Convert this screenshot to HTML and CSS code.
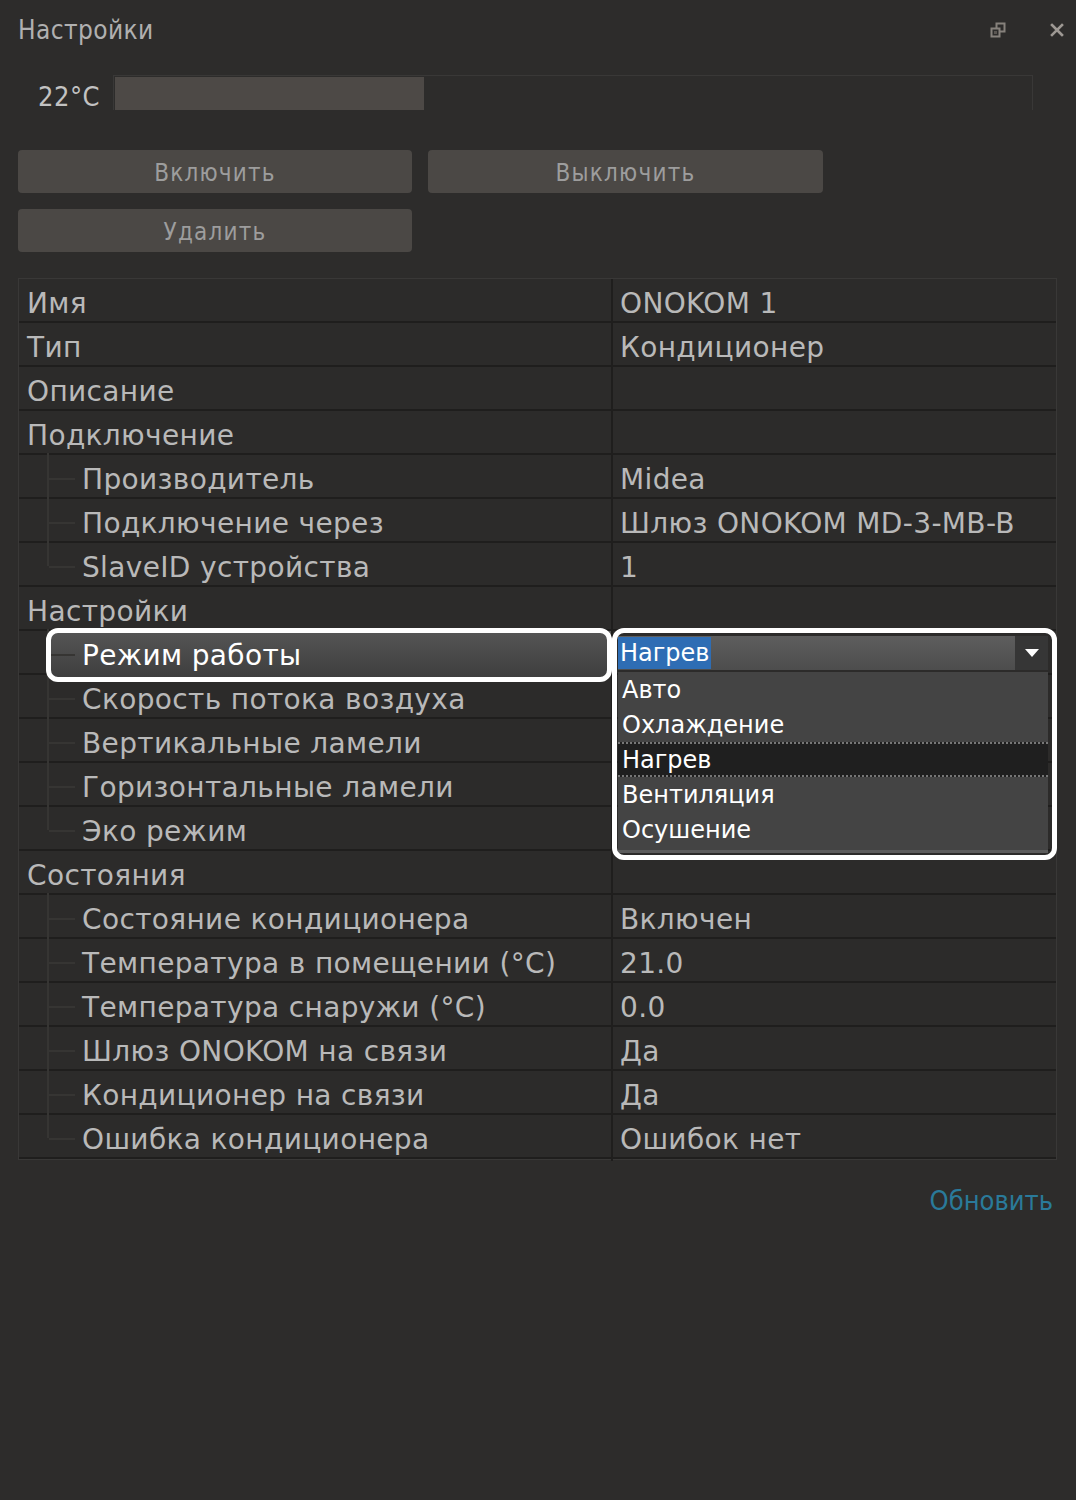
FILE: index.html
```html
<!DOCTYPE html>
<html lang="ru">
<head>
<meta charset="utf-8">
<title>Настройки</title>
<link rel="stylesheet" href="styles.css">
</head>
<body>
<div class="window">
  <header class="titlebar">
    <span class="title">Настройки</span>
    <div class="win-icons">
      <svg class="ico-restore" width="16" height="16" viewBox="0 0 16 16">
        <rect x="6.5" y="1.5" width="8" height="8" fill="#2d2c2b" stroke="#86817c" stroke-width="2"/>
        <rect x="1.5" y="6.5" width="8" height="8" fill="#2d2c2b" stroke="#86817c" stroke-width="2"/>
        <rect x="4" y="9" width="3" height="3" fill="#5a5652"/>
      </svg>
      <svg class="ico-close" width="14" height="14" viewBox="0 0 14 14">
        <path d="M2 2 L12 12 M12 2 L2 12" stroke="#9d9893" stroke-width="2.6" stroke-linecap="square"/>
      </svg>
    </div>
  </header>

  <div class="temp-row">
    <span class="temp-label">22°C</span>
    <div class="bar"><div class="bar-fill" style="width:309px"></div></div>
  </div>

  <div class="buttons">
    <button class="btn">Включить</button>
    <button class="btn">Выключить</button>
    <button class="btn">Удалить</button>
  </div>

  <div class="props">
    <div class="row"><div class="name">Имя</div><div class="val">ONOKOM 1</div></div>
    <div class="row"><div class="name">Тип</div><div class="val">Кондиционер</div></div>
    <div class="row"><div class="name">Описание</div><div class="val"></div></div>
    <div class="row"><div class="name">Подключение</div><div class="val"></div></div>
    <div class="row"><div class="name child">Производитель</div><div class="val">Midea</div></div>
    <div class="row"><div class="name child">Подключение через</div><div class="val">Шлюз ONOKOM MD-3-MB-B</div></div>
    <div class="row"><div class="name child last">SlaveID устройства</div><div class="val">1</div></div>
    <div class="row"><div class="name">Настройки</div><div class="val"></div></div>
    <div class="row selected"><div class="name child">Режим работы</div><div class="val"></div></div>
    <div class="row"><div class="name child">Скорость потока воздуха</div><div class="val"></div></div>
    <div class="row"><div class="name child">Вертикальные ламели</div><div class="val"></div></div>
    <div class="row"><div class="name child">Горизонтальные ламели</div><div class="val"></div></div>
    <div class="row"><div class="name child last">Эко режим</div><div class="val"></div></div>
    <div class="row"><div class="name">Состояния</div><div class="val"></div></div>
    <div class="row"><div class="name child">Состояние кондиционера</div><div class="val">Включен</div></div>
    <div class="row"><div class="name child">Температура в помещении (°C)</div><div class="val">21.0</div></div>
    <div class="row"><div class="name child">Температура снаружи (°C)</div><div class="val">0.0</div></div>
    <div class="row"><div class="name child">Шлюз ONOKOM на связи</div><div class="val">Да</div></div>
    <div class="row"><div class="name child">Кондиционер на связи</div><div class="val">Да</div></div>
    <div class="row"><div class="name child last">Ошибка кондиционера</div><div class="val">Ошибок нет</div></div>

    <div class="dropdown">
      <div class="combo">
        <span class="combo-text">Нагрев</span>
        <span class="combo-arrow"><svg width="14" height="8" viewBox="0 0 14 8"><path d="M0 0 H14 L7 8 Z" fill="#ffffff"/></svg></span>
      </div>
      <ul class="options">
        <li>Авто</li>
        <li>Охлаждение</li>
        <li class="current">Нагрев</li>
        <li>Вентиляция</li>
        <li>Осушение</li>
      </ul>
    </div>

    <div class="mark mark-name"></div>
    <div class="mark mark-value"></div>
  </div>

  <div class="footer"><a class="refresh">Обновить</a></div>
</div>
</body>
</html>
```

FILE: styles.css
```css
* { box-sizing: border-box; }

html, body {
  margin: 0;
  padding: 0;
  background: #2d2c2b;
}

body {
  font-family: "DejaVu Sans", "Noto Sans", sans-serif;
  color: #b8b8b8;
}

.window {
  width: 1076px;
  height: 1500px;
  padding: 0 19px 0 18px;
  background: #2d2c2b;
}

.titlebar {
  height: 60px;
  display: flex;
  align-items: center;
  justify-content: space-between;
  margin-right: -7px;
}

.title {
  font-family: "DejaVu Sans Condensed", "DejaVu Sans", sans-serif;
  font-size: 26px;
  color: #b0b0b0;
  letter-spacing: 0.4px;
}

.win-icons {
  display: flex;
  align-items: center;
  gap: 44px;
}

.temp-row {
  margin-top: 15px;
  height: 35px;
  display: flex;
  align-items: center;
  padding-left: 20px;
}

.temp-label {
  width: 75px;
  padding-top: 7px;
  font-family: "DejaVu Sans Condensed", "DejaVu Sans", sans-serif;
  font-size: 27px;
  letter-spacing: 0.5px;
  color: #c2c2c2;
}

.bar {
  width: 920px;
  height: 35px;
  border: 1px solid #393837;
  border-bottom: none;
  padding: 1px 1px 0 1px;
}

.bar-fill {
  height: 100%;
  background: #4d4946;
}

.buttons {
  margin-top: 40px;
  display: grid;
  grid-template-columns: 394px 395px;
  column-gap: 16px;
  row-gap: 16px;
}

.btn {
  height: 43px;
  border: none;
  border-radius: 4px;
  background: #4b4845;
  color: #9d9d9d;
  font-family: "DejaVu Sans Condensed", "DejaVu Sans", sans-serif;
  font-size: 24px;
  letter-spacing: 1.2px;
  padding: 3px 0 0 0;
}

.props {
  position: relative;
  margin-top: 26px;
  width: 1039px;
  border: 1px solid #393837;
  background: #2c2b2a;
}

.row {
  display: grid;
  grid-template-columns: 594px 1fr;
  height: 44px;
  border-bottom: 2px solid #1f1e1d;
}

.row:last-of-type {
  height: 42px;
  border-bottom: none;
}

.name, .val {
  font-size: 28px;
  line-height: 42px;
  padding-top: 4px;
  letter-spacing: 0.35px;
  white-space: nowrap;
  color: #b9b9b9;
}

.name {
  position: relative;
  padding-left: 8px;
  border-right: 2px solid #1f1e1d;
}

.val {
  padding-left: 7px;
}

.name.child {
  padding-left: 63px;
}

/* tree lines */
.name.child::before {
  content: "";
  position: absolute;
  left: 28px;
  top: -2px;
  bottom: -2px;
  border-left: 2px solid #363533;
}

.name.child.last::before {
  bottom: 50%;
}

.name.child::after {
  content: "";
  position: absolute;
  left: 30px;
  width: 26px;
  top: 50%;
  border-top: 2px solid #363533;
}

.row.selected .name {
  color: #ffffff;
  background: linear-gradient(#555555, #3e3e3e) 28px 0 / calc(100% - 28px) 100% no-repeat;
}

/* open combo box */
.dropdown {
  position: absolute;
  left: 599px;
  top: 357px;
  width: 430px;
  z-index: 2;
}

.combo {
  height: 34px;
  display: flex;
  align-items: stretch;
  background: linear-gradient(#5e5e5e, #4d4d4d);
}

.combo-text {
  background: #2e6db4;
  color: #ffffff;
  font-size: 24px;
  line-height: 32px;
  padding: 0 1px 0 2px;
  margin: 1px 0;
}

.combo-arrow {
  margin-left: auto;
  width: 33px;
  background: #363636;
  display: flex;
  align-items: center;
  justify-content: center;
}

.options {
  list-style: none;
  margin: 0;
  margin-top: 2px;
  padding: 0 0 3px 0;
  background: #444444;
  border-bottom: 3px solid #5c5c5c;
}

.options li {
  height: 35px;
  line-height: 37px;
  padding-left: 4px;
  font-size: 24px;
  color: #ffffff;
}

.options li.current {
  background: #1f1f1f;
  border-top: 2px dotted #777777;
  border-bottom: 2px dotted #777777;
  line-height: 33px;
}

/* highlight marks */
.mark {
  position: absolute;
  border: 5px solid #ffffff;
  border-radius: 12px;
  z-index: 3;
  pointer-events: none;
}

.mark-name {
  left: 27px;
  top: 349px;
  width: 566px;
  height: 54px;
}

.mark-value {
  left: 593px;
  top: 349px;
  width: 445px;
  height: 232px;
}

.footer {
  margin-top: 26px;
  text-align: right;
  padding-right: 4px;
}

.refresh {
  font-family: "DejaVu Sans Condensed", "DejaVu Sans", sans-serif;
  font-size: 27px;
  line-height: 30px;
  color: #2a7a9a;
}
```
